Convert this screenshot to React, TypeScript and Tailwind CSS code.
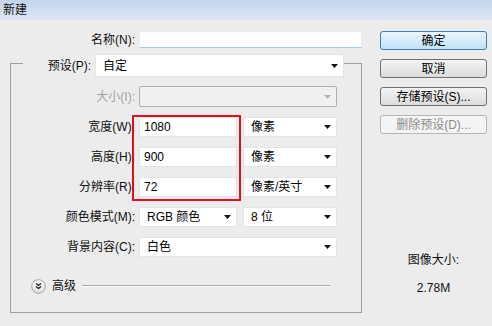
import React from 'react'

const font = { fontFamily: '"Liberation Sans", "Noto Sans CJK SC", sans-serif' }

function Arrow({ disabled }: { disabled?: boolean }) {
  return (
    <svg width="7" height="4" viewBox="0 0 7 4" className="shrink-0">
      <path d="M0 0h7L3.5 4z" fill={disabled ? '#b4b4b4' : '#111'} />
    </svg>
  )
}

function Field({ value, className = '' }: { value: string; className?: string }) {
  return (
    <div className={`flex items-center bg-white border border-[#e4e4e4] pl-[4px] text-[12px] text-black ${className}`}>
      {value}
    </div>
  )
}

function Select({ value, className = '' }: { value: string; className?: string }) {
  return (
    <div className={`flex items-center justify-between bg-white border border-[#e4e4e4] pl-[7px] pr-[5px] text-[12px] text-black ${className}`}>
      <span>{value}</span>
      <Arrow />
    </div>
  )
}

function Row({ label, children }: { label: string; children: React.ReactNode }) {
  return (
    <div className="flex items-center h-[20px] mt-[10px]">
      <div className="w-[124px] text-right text-[12px] text-[#111]">{label}</div>
      <div className="flex ml-[4px] gap-[6px]">{children}</div>
    </div>
  )
}

function Button({ label, primary, disabled }: { label: string; primary?: boolean; disabled?: boolean }) {
  const tone = primary
    ? 'border-[#3c7fb1] bg-gradient-to-b from-[#eaf6fd] to-[#bfe3f7] text-black'
    : disabled
      ? 'border-[#b5b8ba] bg-[#f4f4f4] text-[#8a8a8a]'
      : 'border-[#707070] bg-gradient-to-b from-[#f4f4f4] to-[#dcdcdc] text-black'
  return (
    <div className={`h-[19px] w-[107px] rounded-[3px] border flex items-center justify-center text-[12px] ${tone}`}>
      {label}
    </div>
  )
}

export default function App() {
  return (
    <div className="relative w-[492px] h-[326px] bg-[#ececec] overflow-hidden" style={font}>
      {/* title bar */}
      <div className="h-[20px] bg-gradient-to-b from-[#c3d5ea] to-[#dde7f2] flex items-center pl-[3px] text-[12px] text-[#111]">
        新建
      </div>

      <div className="flex">
        {/* left column */}
        <div className="w-[370px]">
          <div className="flex items-center mt-[11px] h-[17px]">
            <div className="w-[135px] text-right text-[12px] text-[#111]">名称(N):</div>
            <div className="ml-[4px] w-[223px] h-[17px] bg-white border border-[#ececec] border-b-[#a5cde3]" />
          </div>

          <fieldset className="ml-[10px] w-[352px] border border-[#a0a0a0] pb-[18px] mt-[1px]">
            <legend className="ml-[12px] pt-[5px]">
              <div className="flex items-center">
                <div className="w-[68px] text-right text-[12px] text-[#111]">预设(P):</div>
                <Select value="自定" className="ml-[4px] w-[249px] h-[23px]" />
              </div>
            </legend>

            <div className="flex items-center h-[21px] mt-[9px]">
              <div className="w-[124px] text-right text-[12px] text-[#a3a3a3]">大小(I):</div>
              <div className="ml-[4px] w-[198px] h-[21px] flex items-center justify-end pr-[5px] bg-[#f0f0f0] border border-[#b0b0b0] rounded-[2px]">
                <Arrow disabled />
              </div>
            </div>

            <Row label="宽度(W):">
              <Field value="1080" className="w-[98px] h-[20px]" />
              <Select value="像素" className="w-[94px] h-[20px]" />
            </Row>
            <Row label="高度(H):">
              <Field value="900" className="w-[98px] h-[20px]" />
              <Select value="像素" className="w-[94px] h-[20px]" />
            </Row>
            <Row label="分辨率(R):">
              <Field value="72" className="w-[98px] h-[20px]" />
              <Select value="像素/英寸" className="w-[94px] h-[20px]" />
            </Row>
            <Row label="颜色模式(M):">
              <Select value="RGB 颜色" className="w-[98px] h-[20px]" />
              <Select value="8 位" className="w-[94px] h-[20px]" />
            </Row>
            <Row label="背景内容(C):">
              <Select value="白色" className="w-[198px] h-[20px]" />
            </Row>

            <div className="flex items-center h-[16px] mt-[21px] ml-[20px]">
              <svg width="15" height="15" viewBox="0 0 15 15" className="shrink-0">
                <defs>
                  <linearGradient id="adv" x1="0" y1="0" x2="0" y2="1">
                    <stop offset="0" stopColor="#ffffff" />
                    <stop offset="1" stopColor="#dedede" />
                  </linearGradient>
                </defs>
                <circle cx="7.5" cy="7.5" r="6.8" fill="url(#adv)" stroke="#a2a2a2" />
                <path d="M5 4.5l2.5 2 2.5-2M5 7.5l2.5 2 2.5-2" fill="none" stroke="#222" strokeWidth="1.3" />
              </svg>
              <span className="ml-[6px] text-[12px] text-[#111]">高级</span>
              <div className="ml-[6px] w-[248px] h-[2px] border-t border-[#a7a7a7] border-b border-b-white" />
            </div>
          </fieldset>
        </div>

        {/* right column */}
        <div className="ml-[10px] w-[107px] mt-[11px] flex flex-col">
          <div className="flex flex-col gap-[9px]">
            <Button label="确定" primary />
            <Button label="取消" />
            <Button label="存储预设(S)..." />
            <Button label="删除预设(D)..." disabled />
          </div>
          <div className="mt-[117px] text-center text-[12px] text-[#111]">图像大小:</div>
          <div className="mt-[10px] text-center text-[12px] text-[#111]">2.78M</div>
        </div>
      </div>

      {/* red annotation box */}
      <div className="absolute left-[132px] top-[115px] w-[109px] h-[86px] border-2 border-[#e2101c]" />
    </div>
  )
}
